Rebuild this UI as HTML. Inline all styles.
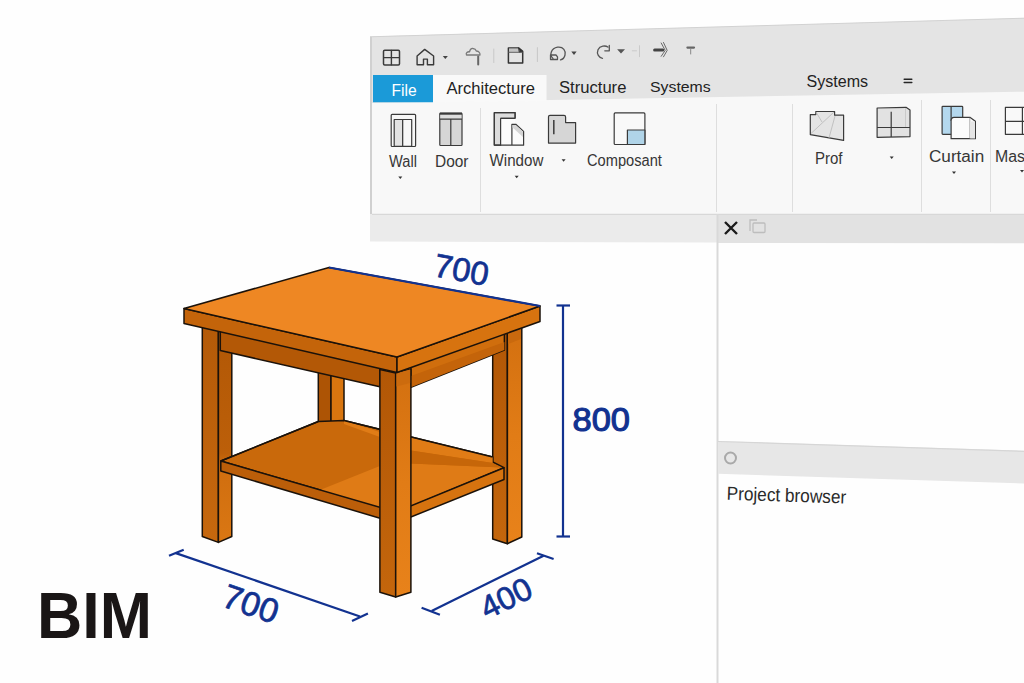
<!DOCTYPE html>
<html><head><meta charset="utf-8">
<style>
html,body{margin:0;padding:0;background:#fff;width:1024px;height:683px;overflow:hidden}
svg{display:block}
text{font-family:"Liberation Sans",sans-serif}
</style></head>
<body>
<svg width="1024" height="683" viewBox="0 0 1024 683">
<rect width="1024" height="683" fill="#fefefe"/>

<!-- ===== UI ===== -->
<g id="ui">
  <!-- frame gray (toolbar + tabs) -->
  <polygon points="370,36.6 1024,18 1024,215 370,215" fill="#e4e4e4"/>
  <line x1="370" y1="36.8" x2="1024" y2="18.2" stroke="#d2d2d2" stroke-width="1"/>
  <line x1="371" y1="37" x2="371" y2="214" stroke="#d0d0d0" stroke-width="2"/>
  <!-- ribbon panel -->
  <polygon points="372,103 1024,91.7 1024,214 372,214" fill="#f8f8f8"/>
  <!-- File -->
  <polygon points="373,75 433,75 433,102.2 373,102.2" fill="#1b9ad8"/>
  <!-- Architecture tab -->
  <polygon points="433,75 546.5,75 546.5,101 433,102.2" fill="#f9f9f9"/>
  <!-- left strip -->
  <polygon points="370,214 717,214 717,242.5 370,241.6" fill="#ebebeb"/>
  <line x1="372" y1="214.3" x2="1024" y2="214.3" stroke="#d8d8d8" stroke-width="1.2"/>
  <!-- right panel strip -->
  <polygon points="718,215 1024,215 1024,243.2 718,243" fill="#e2e2e2"/>
  <!-- panel left border -->
  <rect x="716.5" y="214" width="2" height="469" fill="#d9d9d9"/>
  <!-- ribbon separators -->
  <line x1="480.5" y1="108" x2="480.5" y2="212" stroke="#dedede" stroke-width="1"/>
  <line x1="716.5" y1="104" x2="716.5" y2="212" stroke="#dedede" stroke-width="1"/>
  <line x1="792.5" y1="104" x2="792.5" y2="212" stroke="#dedede" stroke-width="1"/>
  <line x1="921.5" y1="100" x2="921.5" y2="212" stroke="#dedede" stroke-width="1"/>
  <line x1="990.5" y1="100" x2="990.5" y2="212" stroke="#dedede" stroke-width="1"/>

  <!-- lower panel strip -->
  <polygon points="718,441 1024,450.8 1024,483.5 718,473.8" fill="#e7e7e7"/>
  <line x1="718" y1="441.5" x2="1024" y2="451.3" stroke="#d6d6d6" stroke-width="1.2"/>
  <circle cx="730.5" cy="458" r="5.5" fill="none" stroke="#a9a9a9" stroke-width="2"/>

  <!-- toolbar icons -->
  <g fill="none" stroke-linejoin="round" stroke-linecap="round">
    <rect x="383.5" y="50.3" width="16" height="14.7" rx="1.2" stroke="#3a3a3a" stroke-width="1.5"/>
    <path d="M391.4,50.5 V64.8 M383.7,57.6 H399.3" stroke="#3a3a3a" stroke-width="1.4"/>
    <path d="M424.7,49.4 L417.1,56 V64.8 H423.5 V59.1 H427.4 V64.8 H433.6 V56 Z" stroke="#3a3a3a" stroke-width="1.4"/>
    <path d="M466.5,55 C465.5,53 467.5,51.5 469.5,51.8 C470,49.5 471.5,48.3 473,48.5 C475,48.7 476,50 476.3,51 C478.5,51 480.2,52.8 480,55 Z" stroke="#7a7a7a" stroke-width="1.3"/>
    <path d="M478.2,56.5 V64.6" stroke="#666" stroke-width="2"/>
    <path d="M493.8,49 V62.6" stroke="#c8c8c8" stroke-width="1"/>
    <path d="M508.4,48 H518.9 L522.7,51.3 V63 H508.4 Z" stroke="#333" stroke-width="1.5"/>
    <path d="M508.6,52.1 H522.5" stroke="#555" stroke-width="1.2"/>
    <path d="M509,48.6 H518.5 L519.5,51.5 H509 Z" fill="#c4c4c4" stroke="none"/>
    <path d="M518.6,48 L522.7,51.4 L519.6,52 Z" fill="#333" stroke="#333" stroke-width="0.8"/>
    <path d="M537.4,47.6 V61.6" stroke="#c8c8c8" stroke-width="1"/>
    <path d="M553,58.5 C549,55 551,48.5 557.6,47.2 C563.5,46.5 566,51 565,55 C564.3,58 562.5,59.5 560.5,59.8" stroke="#555" stroke-width="1.3"/>
    <path d="M550.5,55 H556 L557.5,56.8 V59.5 H550.5 Z" stroke="#555" stroke-width="1.3"/>
    <path d="M609.3,45.5 V50.8 H604.8 M607.8,47 C605.5,45.3 600,45.5 598,49.8 C596.3,53.8 599,58 602.5,58.3" stroke="#555" stroke-width="1.3"/>
    <path d="M632.3,50.8 H636.5 M639.5,45.7 V56.7" stroke="#cacaca" stroke-width="1"/>
    <path d="M654.6,50 H662.8" stroke="#444" stroke-width="3"/>
    <path d="M661.2,43 L665.2,50.4 L661.2,56.3 M663.5,42.5 L667.2,50.4 L663.5,56.8" stroke="#6a6a6a" stroke-width="1"/>
    <path d="M687.4,47.6 H694" stroke="#666" stroke-width="2.2"/>
    <path d="M690.7,49.5 V54" stroke="#888" stroke-width="1"/>
  </g>
  <g fill="#444">
    <polygon points="442.8,56 447.9,56 445.3,59.1"/>
    <polygon points="571.3,51.6 576.6,51.6 574,55"/>
    <polygon points="617.1,49.2 625,49.2 621,53.6" fill="#555"/>
  </g>

  <!-- ribbon icons -->
  <g stroke="#3a3a3a" stroke-width="1.2" stroke-linejoin="round">
    <!-- wall -->
    <rect x="391.2" y="114.3" width="24.4" height="32.2" rx="1" fill="#f7f7f7"/>
    <rect x="394.2" y="119.5" width="8.5" height="26.8" fill="#e3e3e3"/>
    <rect x="402.7" y="119.5" width="9" height="26.8" fill="#f8f8f8"/>
    <!-- door -->
    <rect x="439.8" y="113.3" width="22.2" height="32.2" rx="0.8" fill="#d6d6d6"/>
    <rect x="440.3" y="113.8" width="21.2" height="5.4" fill="#dddddd" stroke="none"/>
    <path d="M439.8,119.2 H462 M450.8,119.2 V145.5" fill="none"/>
    <path d="M439.8,113.6 H462" stroke-width="2.2"/>
    <!-- window -->
    <path d="M494.3,112.6 H515.1 V118.3 H500.6 V145.2 H494.3 Z" fill="#dcdcdc"/>
    <rect x="500.6" y="118.5" width="14.5" height="26.7" fill="#fbfbfb" stroke="none"/>
    <path d="M494.3,145.2 H523.6 V131.4 L515.8,124.3 H511.9 V145.2" fill="#fbfbfb"/>
    <path d="M512.5,125 H515.6 L523,131.8 V137 L512.5,127.5 Z" fill="#d5d5d5" stroke="none"/>
    <path d="M494.3,112.6 H515.1 V118.3 M500.6,118.5 V145.2 M515.1,118.3 H500.6 M494.3,112.6 V145.2" fill="none"/>
    <!-- folder -->
    <path d="M548.5,116.8 Q548.5,115.3 550,115.3 H564 Q565.6,115.3 565.6,117 V122.6 H575.6 V143.1 H548.5 Z" fill="#d6d6d6"/>
    <path d="M553.8,120.1 V134.3" stroke="#444" stroke-width="1.6"/>
    <!-- composant -->
    <rect x="614.2" y="112.9" width="30.7" height="31.6" rx="1" fill="#f9f9f9"/>
    <rect x="627.4" y="130" width="17.5" height="14.5" fill="#b0d4e8"/>
    <!-- prof -->
    <path d="M810.3,114.6 H815.8 V111.5 H834.6 V115.2 H843.6 V140.4 L810.3,134.6 Z" fill="#e4e4e4"/>
    <path d="M811,133.5 L834,112 M829,138 L835,116 M816,112 L822,122" stroke="#b8b8b8" stroke-width="0.8" fill="none"/>
    <!-- grid -->
    <path d="M877.1,108 L906,107.3 L910,110 V136.6 L877.1,137.3 Z" fill="#e2e2e2"/>
    <path d="M891.2,111.7 V137 M877.1,127.5 H910" fill="none"/>
    <path d="M905.5,108 V127" stroke="#c4c4c4" stroke-width="0.8" fill="none"/>
    <!-- curtain -->
    <rect x="942.1" y="106.3" width="20.6" height="28" rx="0.8" fill="#b4d8ee"/>
    <path d="M951.1,106.3 V121" fill="none"/>
    <path d="M951.1,121 Q951.1,117.4 954,117.4 H970.2 L975.4,121.3 V138.7 H951.1 Z" fill="#fbfbfb"/>
    <path d="M969.8,117.8 V138.5" stroke="#999" stroke-width="0.8" fill="none"/>
    <rect x="970.2" y="121.5" width="4.8" height="17" fill="#e6e6e6" stroke="none"/>
    <!-- mas -->
    <rect x="1005.4" y="107.4" width="30" height="26.9" fill="#f9f9f9"/>
    <path d="M1005.4,121.3 H1024 M1022.4,107.4 V134.3" fill="none"/>
  </g>

  <!-- tab texts -->
  <text x="391.5" y="95.8" font-size="15.6" fill="#ffffff">File</text>
  <text x="446.5" y="94.2" font-size="16" fill="#222" textLength="88.4" lengthAdjust="spacingAndGlyphs">Architecture</text>
  <text x="559" y="93.2" font-size="16" fill="#222" textLength="67.4" lengthAdjust="spacingAndGlyphs">Structure</text>
  <text x="650" y="91.5" font-size="15.4" fill="#222" textLength="60.7" lengthAdjust="spacingAndGlyphs">Systems</text>
  <text x="806.5" y="87.3" font-size="15.6" fill="#222" textLength="61.6" lengthAdjust="spacingAndGlyphs">Systems</text>
  <path d="M904.2,79.3 H911.8 M904.2,82.6 H911.8" stroke="#262626" stroke-width="1.5" stroke-linecap="round"/>

  <!-- ribbon labels -->
  <g font-size="16" fill="#363636">
    <text x="389" y="166.5" textLength="27.9" lengthAdjust="spacingAndGlyphs">Wall</text>
    <text x="435" y="166.5" textLength="33.5" lengthAdjust="spacingAndGlyphs">Door</text>
    <text x="489.5" y="165.5" textLength="53.8" lengthAdjust="spacingAndGlyphs">Window</text>
    <text x="587" y="165.5" textLength="74.9" lengthAdjust="spacingAndGlyphs">Composant</text>
    <text x="815" y="163.6" textLength="27.5" lengthAdjust="spacingAndGlyphs">Prof</text>
    <text x="929" y="162.4" textLength="55.2" lengthAdjust="spacingAndGlyphs">Curtain</text>
    <text x="995" y="162" textLength="30" lengthAdjust="spacingAndGlyphs">Mas</text>
  </g>
  <!-- small dropdown triangles -->
  <g fill="#333">
    <polygon points="398.3,176.5 402.3,176.5 400.3,179"/>
    <polygon points="514.7,175.8 518.7,175.8 516.7,178.3"/>
    <polygon points="561.6,159.3 565.6,159.3 563.6,161.8"/>
    <polygon points="889.7,156.6 893.7,156.6 891.7,159.1"/>
    <polygon points="952,171.5 956,171.5 954,174"/>
    <polygon points="1020,170 1024,170 1022,172.5"/>
  </g>

  <!-- Project browser -->
  <text x="726.5" y="499.8" font-size="19" fill="#2a2a2a" transform="rotate(1.8 726 500)" textLength="119.5" lengthAdjust="spacingAndGlyphs">Project browser</text>

  <!-- X and restore -->
  <path d="M725,222 L737,234 M737,222 L725,234" stroke="#1a1a1a" stroke-width="2.4"/>
  <g fill="none" stroke="#bdbdbd" stroke-width="1.3">
    <path d="M750,231 L750,220 L757,220"/>
    <rect x="753" y="223" width="12" height="9.5" rx="1"/>
  </g>
</g>

<!-- ===== TABLE ===== -->
<defs>
  <linearGradient id="legL" x1="0" y1="0" x2="0" y2="1">
    <stop offset="0" stop-color="#b25706"/><stop offset="1" stop-color="#c4660c"/>
  </linearGradient>
  <linearGradient id="legR" x1="0" y1="0" x2="0" y2="1">
    <stop offset="0" stop-color="#d37010"/><stop offset="0.5" stop-color="#e17c16"/><stop offset="1" stop-color="#e8821a"/>
  </linearGradient>
  <linearGradient id="legLL" x1="0" y1="0" x2="0" y2="1">
    <stop offset="0" stop-color="#b45a08"/><stop offset="1" stop-color="#c6680e"/>
  </linearGradient>
  <linearGradient id="legLR" x1="0" y1="0" x2="0" y2="1">
    <stop offset="0" stop-color="#b25806"/><stop offset="0.58" stop-color="#bc5f09"/><stop offset="0.64" stop-color="#d06e0f"/><stop offset="1" stop-color="#da7713"/>
  </linearGradient>
</defs>
<g id="table" stroke="#1b120a" stroke-width="1.5" stroke-linejoin="round">
  <!-- back leg -->
  <polygon points="318.3,368 331,371 331,424 318.3,421.5" fill="#ad5405"/>
  <polygon points="331,371 344,368 344,420.4 331,424" fill="#d8750f"/>
  <!-- right leg -->
  <polygon points="492.7,336 507.4,333 507.4,543.7 492.7,539" fill="url(#legL)"/>
  <polygon points="507.4,333 521.8,328 521.8,537 507.4,543.7" fill="url(#legR)"/>
  <polygon points="508.2,333 521,328.5 521,339 508.2,344" fill="#c9690e" stroke="none"/>
  <!-- left leg -->
  <polygon points="202.3,326 218.4,330 218.4,542.4 202.3,536.5" fill="url(#legLL)"/>
  <polygon points="218.4,330 231.8,333 231.8,536.5 218.4,542.4" fill="url(#legLR)"/>
  <!-- left apron -->
  <polygon points="220.3,328 379.8,365 379.8,386.8 220.3,350.5" fill="#b35806"/>
  <!-- right apron -->
  <polygon points="410.9,365 504.4,331 504.4,350 410.9,387.3" fill="#d06e0d"/>
  <polygon points="410.9,376 504.4,342 504.4,350 410.9,387.3" fill="#c4640a" stroke="none"/>
  <!-- shelf top -->
  <polygon points="318.3,421.5 220.8,461 396,512 504,467.7 492.7,462 492.7,457 344,420.4" fill="#c9690b"/>
  <!-- shelf shading -->
  <polygon points="320,489.9 379.8,466 410.9,463.5 502,467.5 396,512" fill="#df7b16" stroke="none"/>
  <polygon points="344,420.4 379.8,432 379.8,437 344,424" fill="#e07c16" stroke="none"/>
  <polygon points="410.9,437.5 492.7,457 492.7,463 410.9,450.5" fill="#e07c16" stroke="none"/>
  <polygon points="410.9,450.5 492.7,463 502,467.5 410.9,463.5" fill="#c66609" stroke="none"/>
  <path d="M318.3,421.5 L220.8,461 M344,420.4 L492.7,457" fill="none"/>
  <!-- shelf faces -->
  <polygon points="220.8,461 396,512 396,523 220.8,471" fill="#bb5e09"/>
  <polygon points="396,512 504,467.7 504,479.5 396,523" fill="#d6730f"/>
  <!-- front leg -->
  <polygon points="379.9,369.5 395.7,373 395.7,597 379.9,592.3" fill="url(#legL)"/>
  <polygon points="395.7,373 410.9,369 410.9,592.3 395.7,597" fill="url(#legR)"/>
  <polygon points="396.5,373 410.1,369.5 410.1,383 396.5,386.5" fill="#cc6b0e" stroke="none"/>
  <!-- top thickness faces -->
  <polygon points="184,308.5 397,357 397,372.5 184,323.5" fill="#c4640a"/>
  <polygon points="397,357 540,306 540,321.5 397,372.5" fill="#d7730f"/>
  <!-- top surface -->
  <polygon points="329,267.5 184,308.5 397,357 540,306" fill="#ee8723"/>
</g>

<!-- ===== DIMENSIONS ===== -->
<g stroke="#123290" stroke-width="2.2" fill="none">
  <line x1="329" y1="267.5" x2="540" y2="306"/>
  <line x1="563" y1="305.5" x2="563" y2="536.5"/>
  <line x1="556.5" y1="305.5" x2="570" y2="305.5"/>
  <line x1="556.5" y1="536.5" x2="570" y2="536.5"/>
  <line x1="175.8" y1="553.1" x2="360" y2="616.5"/>
  <line x1="169" y1="555.8" x2="183.7" y2="549.8"/>
  <line x1="352" y1="621" x2="367.9" y2="613.6"/>
  <line x1="431.6" y1="611" x2="543.6" y2="555.7"/>
  <line x1="421.6" y1="607.7" x2="439.9" y2="614.7"/>
  <line x1="537" y1="553.2" x2="553.6" y2="559"/>
</g>
<g fill="#123290" stroke="#123290" stroke-width="0.7">
  <text x="572.5" y="431" font-size="33" stroke-width="1.1" textLength="57.5" lengthAdjust="spacingAndGlyphs">800</text>
  <text x="0" y="0" font-size="33" transform="translate(459.5 281) rotate(10.3)" text-anchor="middle">700</text>
  <text x="0" y="0" font-size="34" transform="translate(247 615) rotate(19)" text-anchor="middle">700</text>
  <text x="0" y="0" font-size="32" transform="translate(511 608) rotate(-26.3)" text-anchor="middle">400</text>
</g>

<!-- BIM -->
<text x="37" y="638.3" font-size="65" font-weight="bold" fill="#1a1616" textLength="115" lengthAdjust="spacingAndGlyphs">BIM</text>

</svg>
</body></html>
